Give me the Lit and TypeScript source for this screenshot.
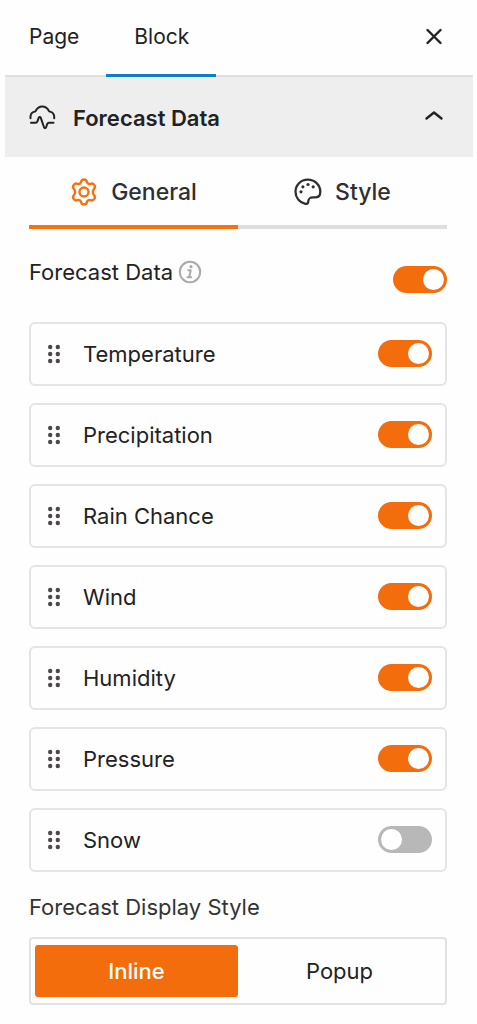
import { LitElement, html, css, svg } from "lit";
import { customElement, property, state } from "lit/decorators.js";
import { classMap } from "lit/directives/class-map.js";

@customElement("toggle-switch")
class ToggleSwitch extends LitElement {
  @property({ type: Boolean }) checked = false;
  @property() label = "";

  static styles = css`
    :host {
      display: block;
      flex: none;
    }
    .switch {
      appearance: none;
      display: flex;
      align-items: center;
      box-sizing: border-box;
      width: 54px;
      height: 27px;
      margin: 0;
      padding: 0 3px;
      border-radius: 14px;
      background: #b8b8b8;
      cursor: pointer;
    }
    .switch::before {
      content: "";
      width: 21px;
      height: 21px;
      border-radius: 50%;
      background: #fff;
    }
    .switch:checked {
      justify-content: flex-end;
      background: #f36d0c;
    }
  `;

  render() {
    return html`<input
      class="switch"
      type="checkbox"
      role="switch"
      aria-label=${this.label}
      .checked=${this.checked}
      @change=${(e: Event) => (this.checked = (e.target as HTMLInputElement).checked)}
    />`;
  }
}

@customElement("data-row")
class DataRow extends LitElement {
  @property() label = "";
  @property({ type: Boolean }) checked = false;

  static styles = css`
    :host {
      display: block;
    }
    .row {
      display: flex;
      align-items: center;
      box-sizing: border-box;
      height: 64px;
      padding: 0 13px 1px 16px;
      border: 2px solid #e4e4e4;
      border-radius: 6px;
    }
    .grip {
      flex: none;
      width: 14px;
      height: 20px;
      margin-right: 22px;
      fill: #4e4848;
    }
    .label {
      flex: 1;
    }
  `;

  render() {
    return html`<div class="row">
      <svg class="grip" viewBox="0 0 14 20" aria-hidden="true">
        ${[3, 10, 17].map(
          (y) => svg`<circle cx="3.2" cy=${y} r="2.2"/><circle cx="10.8" cy=${y} r="2.2"/>`
        )}
      </svg>
      <span class="label">${this.label}</span>
      <toggle-switch .label=${this.label} ?checked=${this.checked}></toggle-switch>
    </div>`;
  }
}

@customElement("app-root")
class AppRoot extends LitElement {
  @state() private displayStyle = "Inline";

  private rows = [
    { label: "Temperature", on: true },
    { label: "Precipitation", on: true },
    { label: "Rain Chance", on: true },
    { label: "Wind", on: true },
    { label: "Humidity", on: true },
    { label: "Pressure", on: true },
    { label: "Snow", on: false },
  ];

  static styles = css`
    :host {
      display: block;
      padding: 0 4px 20px 5px;
      background: #fefefe;
      color: #222;
      font: 400 22px/28px Inter, "Liberation Sans", sans-serif;
    }
    button {
      margin: 0;
      padding: 0;
      border: 0;
      background: none;
      color: inherit;
      font: inherit;
      cursor: pointer;
    }
    svg {
      flex: none;
      fill: none;
      stroke: currentColor;
      stroke-width: 2;
      stroke-linecap: round;
      stroke-linejoin: round;
    }
    .bold {
      stroke-width: 2.4;
    }
    .topbar {
      display: flex;
      height: 77px;
      box-sizing: border-box;
      border-bottom: 2px solid #dfdfdf;
    }
    .topbar .tab {
      height: 77px;
      box-sizing: border-box;
      padding: 0 27px 0 28px;
      border-bottom: 3px solid transparent;
      font-size: 21px;
    }
    .topbar .tab.first {
      padding-left: 24px;
    }
    .topbar .tab.active {
      border-color: #0c80c0;
    }
    .close {
      display: grid;
      place-items: center;
      width: 24px;
      height: 73px;
      margin: 0 27px 0 auto;
    }
    .section {
      display: flex;
      align-items: center;
      width: 100%;
      height: 80px;
      padding: 2px 27px 0 24px;
      background: #eee;
      font-weight: 600;
    }
    .section .title {
      flex: 1;
      margin-left: 17px;
      text-align: left;
    }
    .body {
      padding: 0 26px 0 24px;
    }
    .tabs {
      display: grid;
      grid-template-columns: 1fr 1fr;
    }
    .tabs .tab {
      display: flex;
      align-items: center;
      justify-content: center;
      gap: 13px;
      height: 72px;
      padding-top: 2px;
      border-bottom: 4px solid #dedede;
      color: #2f2f2f;
      font-size: 23px;
      font-weight: 500;
    }
    .tabs .tab.active {
      border-color: #f9700e;
    }
    .tabs .tab.active svg {
      color: #f9700e;
    }
    .master {
      display: flex;
      align-items: flex-start;
      justify-content: space-between;
      padding: 29px 0;
    }
    .master .name {
      display: flex;
      align-items: center;
      gap: 5px;
    }
    .master .info {
      color: #aaa;
    }
    .master toggle-switch {
      margin-top: 8px;
    }
    .rows {
      display: grid;
      gap: 17px;
    }
    .legend {
      margin: 21px 0 16px;
      color: #333;
    }
    .segments {
      display: grid;
      grid-template-columns: 1fr 1fr;
      box-sizing: border-box;
      height: 68px;
      padding: 6px 4px;
      border: 2px solid #e2e2e2;
      border-radius: 4px;
    }
    .segments button {
      border-radius: 3px;
    }
    .segments .active {
      background: #f36d0c;
      color: #fff;
      font-weight: 500;
    }
  `;

  render() {
    return html`
      <header class="topbar">
        <button class="tab first">Page</button>
        <button class="tab active">Block</button>
        <button class="close" aria-label="Close">
          <svg class="bold" width="18" height="18" viewBox="0 0 18 18">
            <path d="M2.500 2l13 13M15.500 2l-13 13"/>
          </svg>
        </button>
      </header>
      <button class="section" aria-expanded="true">
        <svg width="27" height="26" viewBox="0 0 27 26">
          <path d="M1.500 13.200v-1.400c0-2.800 1.600-4.600 4.200-5.200.5-.1.800-.4 1.100-.9C8.200 3 10.500 1.500 13.300 1.500s5.100 1.500 6.500 4.200c.3.500.6.800 1.100.9 2.600.6 4.300 2.400 4.300 5.200v1.400M2 17.800h4.800c.8 0 1.200-.4 1.500-1.100l1.500-4c.4-1 1.500-1 1.900 0l3.400 9.800c.4 1 1.500 1 1.900 0l1.300-3.600c.3-.8.7-1.100 1.600-1.100h4.600"/>
        </svg>
        <span class="title">Forecast Data</span>
        <svg class="bold" width="24" height="24" viewBox="0 0 24 24">
          <path d="M4.500 12.500l7.500-6 7.500 6"/>
        </svg>
      </button>
      <main class="body">
        <div class="tabs" role="tablist">
          <button class="tab active" role="tab" aria-selected="true">
            <svg class="bold" width="28" height="28" viewBox="0 0 28 28">
              <path d="M11.200 3.700c.5-3 5.100-3 5.600 0 .3 1.700 2.100 2.700 3.800 2.100 3.200-1.100 5.800 2.900 3.400 5-1.400 1.400-1.400 5 0 6.400 2.400 2.100-.2 6.100-3.400 5-1.700-.6-3.500.4-3.800 2.100-.5 3-5.100 3-5.600 0-.3-1.700-2.100-2.700-3.800-2.100-3.200 1.100-5.800-2.900-3.400-5 1.400-1.400 1.400-5 0-6.400-2.400-2.100.2-6.100 3.400-5 1.700.6 3.500-.4 3.800-2.100z"/>
              <circle cx="14" cy="14" r="4.500"/>
            </svg>
            General
          </button>
          <button class="tab" role="tab" aria-selected="false">
            <svg width="28" height="28" viewBox="0 0 28 28">
              <path d="M13.700 1.700C6.800 1.700 1.500 7 1.500 13.800c0 6 4.400 11 9.900 12.100 1.500.3 2.700-.6 2.800-2.100.3-3.500 1.400-4.500 4.800-4.500h2.800c2.800 0 4.500-2.300 4.500-5.800C26.300 6.700 20.600 1.700 13.700 1.700z" stroke-width="2.300"/>
              <g fill="currentColor" stroke="none">
                <circle cx="7" cy="13.800" r="1.600"/><circle cx="8.900" cy="8.800" r="1.600"/>
                <circle cx="14" cy="6.500" r="1.600"/><circle cx="19.200" cy="8.800" r="1.600"/>
              </g>
            </svg>
            Style
          </button>
        </div>
        <div class="master">
          <span class="name">
            Forecast Data
            <svg class="info" width="24" height="24" viewBox="0 0 24 24">
              <circle cx="12" cy="12" r="10.200"/>
              <path d="M10.300 10.200h2.400l-1.500 7M9.500 17.300h3.700"/>
              <circle cx="13" cy="6.700" r="1.600" fill="currentColor" stroke="none"/>
            </svg>
          </span>
          <toggle-switch label="Forecast Data" checked></toggle-switch>
        </div>
        <div class="rows">
          ${this.rows.map(
            (r) => html`<data-row .label=${r.label} ?checked=${r.on}></data-row>`
          )}
        </div>
        <div role="group" aria-labelledby="display-style">
          <div class="legend" id="display-style">Forecast Display Style</div>
          <div class="segments">
            ${["Inline", "Popup"].map(
              (s) => html`<button
                class=${classMap({ active: s === this.displayStyle })}
                aria-pressed=${s === this.displayStyle}
                @click=${() => (this.displayStyle = s)}
              >${s}</button>`
            )}
          </div>
        </div>
      </main>
    `;
  }
}
